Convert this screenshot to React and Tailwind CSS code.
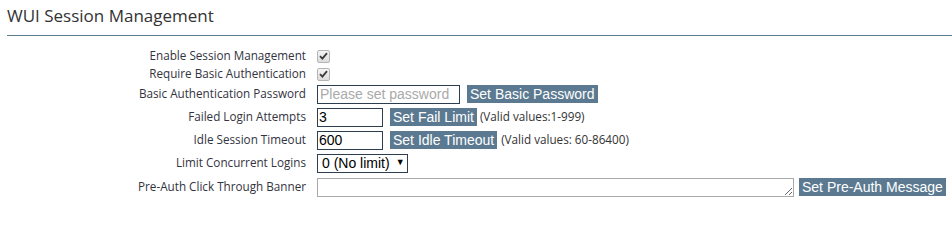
import React from 'react';

const labelFont = { fontFamily: '"Open Sans", "DejaVu Sans", sans-serif' };
const arial = { fontFamily: '"Liberation Sans", Arial, sans-serif' };

const Check = () => (
  <span className="inline-flex items-center justify-center w-[13px] h-[13px] rounded-[2px] border border-[#b5b5b5] bg-gradient-to-b from-[#f4f4f4] to-[#dcdcdc]">
    <svg width="9" height="8" viewBox="0 0 9 8">
      <path d="M1 4.2 L3.4 6.6 L8 1.2" fill="none" stroke="#3a3a3a" strokeWidth="1.8" />
    </svg>
  </span>
);

const Btn = ({ children, className = '' }) => (
  <button
    style={arial}
    className={`shrink-0 whitespace-nowrap bg-[#5b7a91] text-white text-[14px] leading-[18px] h-[18px] px-[3px] ${className}`}
  >
    {children}
  </button>
);

const Row = ({ label, h, children, className = '' }) => (
  <div className={`flex items-center ${h} ${className}`}>
    <div style={labelFont} className="shrink-0 w-[306px] text-right text-[11.7px] text-[#333340]">
      {label}
    </div>
    <div className="flex items-center ml-[11px] whitespace-nowrap">{children}</div>
  </div>
);

export default function App() {
  return (
    <div className="w-[952px] h-[204px] bg-white overflow-hidden">
      <div className="pl-[7px] pt-[4px]">
        <h2 style={labelFont} className="text-[17px] leading-[24px] text-[#333]">
          WUI Session Management
        </h2>
        <div className="mt-[7px] h-px bg-[#5b7b8f]" />
      </div>

      <div className="mt-[11px]">
        <Row label="Enable Session Management" h="h-[18px]">
          <Check />
        </Row>
        <Row label="Require Basic Authentication" h="h-[18px]">
          <Check />
        </Row>
        <Row label="Basic Authentication Password" h="h-[22px]">
          <input
            style={arial}
            placeholder="Please set password"
            className="shrink-0 w-[143px] h-[19px] border border-[#2d3e50] px-[2px] text-[14px] placeholder:text-[#a9a9a9] outline-none"
          />
          <Btn className="ml-[7px]">Set Basic Password</Btn>
        </Row>
        <Row label="Failed Login Attempts" h="h-[22px]" className="mt-px">
          <input
            style={arial}
            defaultValue="3"
            className="shrink-0 w-[66px] h-[19px] border border-[#2d3e50] px-px text-[14px] text-black outline-none"
          />
          <Btn className="ml-[7px]">Set Fail Limit</Btn>
          <span style={labelFont} className="ml-[3px] text-[11.7px] text-[#333]">(Valid values:1-999)</span>
        </Row>
        <Row label="Idle Session Timeout" h="h-[22px]" className="mt-px">
          <input
            style={arial}
            defaultValue="600"
            className="shrink-0 w-[66px] h-[19px] border border-[#2d3e50] px-px text-[14px] text-black outline-none"
          />
          <Btn className="ml-[7px]">Set Idle Timeout</Btn>
          <span style={labelFont} className="ml-[4px] text-[11.7px] text-[#333]">(Valid values: 60-86400)</span>
        </Row>
        <Row label="Limit Concurrent Logins" h="h-[22px]" className="mt-px">
          <div
            style={arial}
            className="shrink-0 flex items-center w-[91px] h-[19px] border border-[#2d3e50] pl-[4px] text-[14px] text-black"
          >
            <span>0 (No limit)</span>
            <span className="ml-[6px] text-[9px]">▼</span>
          </div>
        </Row>
        <Row label="Pre-Auth Click Through Banner" h="h-[22px]" className="mt-[2px]">
          <textarea
            rows={1}
            className="shrink-0 w-[477px] h-[19px] border border-[#a9a9a9] resize block outline-none"
          />
          <Btn className="ml-[5px]">Set Pre-Auth Message</Btn>
        </Row>
      </div>
    </div>
  );
}
